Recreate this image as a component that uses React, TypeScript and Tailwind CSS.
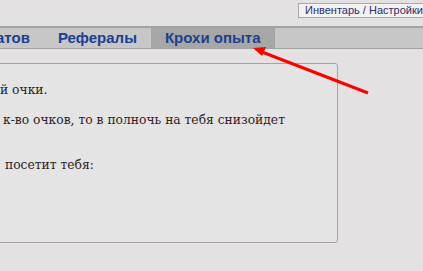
import React from "react";

export default function App() {
  return (
    <div className="relative w-[423px] h-[271px] overflow-hidden bg-[#e3e1e1]">
      <div className="flex h-[26px] pt-[3px]">
        <div className="ml-[298px] shrink-0 h-[15px] w-[140px] border border-[#a9a9a9] bg-[#f3f2f2] pl-[6px] text-[11px] leading-[13px] text-[#2c2c6e] whitespace-nowrap font-['Liberation_Sans',Arial,sans-serif]">
          Инвентарь / Настройки
        </div>
      </div>
      <div className="flex h-[23px] border-t-2 border-b border-[#a3a3a3] bg-[#c7c7c7] font-['Liberation_Sans',Arial,sans-serif] font-bold text-[15px] text-[#1b3f8f] whitespace-nowrap">
        <div className="-ml-[18px] px-[14px] leading-[20px]">атов</div>
        <div className="px-[14px] leading-[20px]">Рефералы</div>
        <div className="px-[14px] leading-[20px] bg-[#a7a7a7]">Крохи опыта</div>
      </div>
      <div className="mt-[14px] -ml-[20px] w-[358px] h-[180px] rounded-[3px] border border-[#a5a5a5] bg-[#e5e4e4] font-['DejaVu_Serif','Liberation_Serif',serif] text-[12.3px] text-[#2a2222] whitespace-nowrap">
        <div className="pt-[16px] pl-[19px] leading-[20px]">й очки.</div>
        <div className="mt-[10px] pl-[22px] leading-[20px]">к-во очков, то в полночь на тебя снизойдет</div>
        <div className="mt-[25px] pl-[24px] leading-[20px]">посетит тебя:</div>
      </div>
      <svg className="absolute left-0 top-0" width="423" height="271" viewBox="0 0 423 271">
        <line x1="368" y1="93" x2="262" y2="52" stroke="#ff0000" strokeWidth="3" />
        <polygon points="253,48 266,47 262,56" fill="#ff0000" />
      </svg>
    </div>
  );
}
